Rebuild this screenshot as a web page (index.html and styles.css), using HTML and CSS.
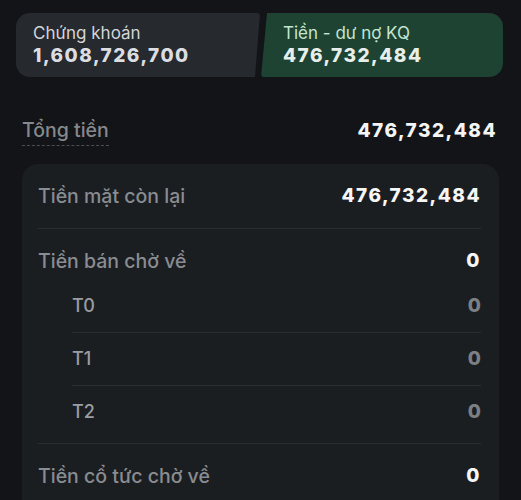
FILE: index.html
```html
<!DOCTYPE html>
<html lang="vi">
<head>
<meta charset="utf-8">
<link rel="stylesheet" href="styles.css">
</head>
<body>
<div class="page">
  <div class="tabs">
    <div class="tab tab-stock">
      <div class="tab-label">Chứng khoán</div>
      <div class="tab-value">1,608,726,700</div>
    </div>
    <div class="tab tab-cash">
      <div class="tab-label">Tiền - dư nợ KQ</div>
      <div class="tab-value">476,732,484</div>
    </div>
  </div>

  <div class="total">
    <span class="total-label">Tổng tiền</span>
    <span class="total-value">476,732,484</span>
  </div>

  <div class="card">
    <div class="row">
      <span class="label">Tiền mặt còn lại</span>
      <span class="value">476,732,484</span>
    </div>
    <div class="group">
      <div class="group-head">
        <span class="label">Tiền bán chờ về</span>
        <span class="value">0</span>
      </div>
      <div class="sub-list">
        <div class="sub-row"><span class="sub-label">T0</span><span class="sub-value">0</span></div>
        <div class="sub-row"><span class="sub-label">T1</span><span class="sub-value">0</span></div>
        <div class="sub-row"><span class="sub-label">T2</span><span class="sub-value">0</span></div>
      </div>
    </div>
    <div class="row">
      <span class="label">Tiền cổ tức chờ về</span>
      <span class="value">0</span>
    </div>
  </div>
</div>
</body>
</html>
```
FILE: styles.css
```css
html, body {
  margin: 0;
  padding: 0;
  background: #121417;
}
body {
  font-family: Inter, "Noto Sans", sans-serif;
  width: 521px;
  height: 500px;
  overflow: hidden;
}
.page {
  box-sizing: border-box;
  height: 500px;
  display: flex;
  flex-direction: column;
  padding: 13px 18px 0 16px;
}
.tabs {
  display: flex;
  gap: 1px;
  height: 64px;
  flex: none;
}
.tab {
  box-sizing: border-box;
  display: flex;
  flex-direction: column;
  justify-content: center;
}
.tab-stock {
  width: 244px;
  background: #26292e;
  border-radius: 14px 3px 3px 14px;
  padding-left: 17px;
  clip-path: polygon(0 0, 100% 0, calc(100% - 5px) 100%, 0 100%);
}
.tab-cash {
  flex: 1;
  background: #1f4333;
  border-radius: 3px 14px 14px 3px;
  padding-left: 22px;
  clip-path: polygon(6px 0, 100% 0, 100% 100%, 0 100%);
}
.tab-label {
  font-size: 17px;
  line-height: 21px;
  color: #d3d5d8;
}
.tab-cash .tab-label {
  color: #c3e6d0;
}
.tab-value {
  font-size: 19px;
  line-height: 24px;
  font-weight: 800;
  letter-spacing: 1.5px;
  color: #dcdde0;
}
.tab-cash .tab-value {
  color: #e8efea;
}
.total {
  display: flex;
  justify-content: space-between;
  align-items: center;
  margin-top: 41px;
  padding-left: 6px;
  height: 24px;
  flex: none;
}
.total-label {
  font-size: 19.5px;
  font-weight: 500;
  color: #85888d;
  border-bottom: 1px dashed #4b4e53;
  padding-bottom: 3px;
  margin-top: 4px;
}
.total-value {
  font-size: 19px;
  font-weight: 800;
  letter-spacing: 1.5px;
  color: #f4f4f5;
  margin-right: 6px;
}
.card {
  flex: 1;
  margin-top: 22px;
  margin-left: 6px;
  margin-right: 4px;
  background: #1b1e21;
  border-radius: 16px 16px 0 0;
  padding: 0 18px 0 16px;
}
.row, .group-head, .sub-row {
  display: flex;
  justify-content: space-between;
  align-items: center;
  line-height: 24px;
}
.row {
  padding: 20px 0;
}
.group {
  border-top: 1px solid #2a2d31;
  border-bottom: 1px solid #2a2d31;
  padding: 20px 0 5px;
}
.label {
  font-size: 19.5px;
  font-weight: 500;
  color: #898c91;
}
.value {
  font-size: 19px;
  font-weight: 800;
  letter-spacing: 1.5px;
  color: #f6f6f7;
}
.sub-list {
  margin-top: 7px;
  margin-left: 34px;
}
.sub-row {
  padding: 14px 0;
}
.sub-row + .sub-row {
  border-top: 1px solid #2a2d31;
}
.sub-label {
  font-size: 18px;
  font-weight: 500;
  color: #9a9da2;
}
.sub-value {
  font-size: 19px;
  font-weight: 800;
  color: #7c7f84;
}
```
